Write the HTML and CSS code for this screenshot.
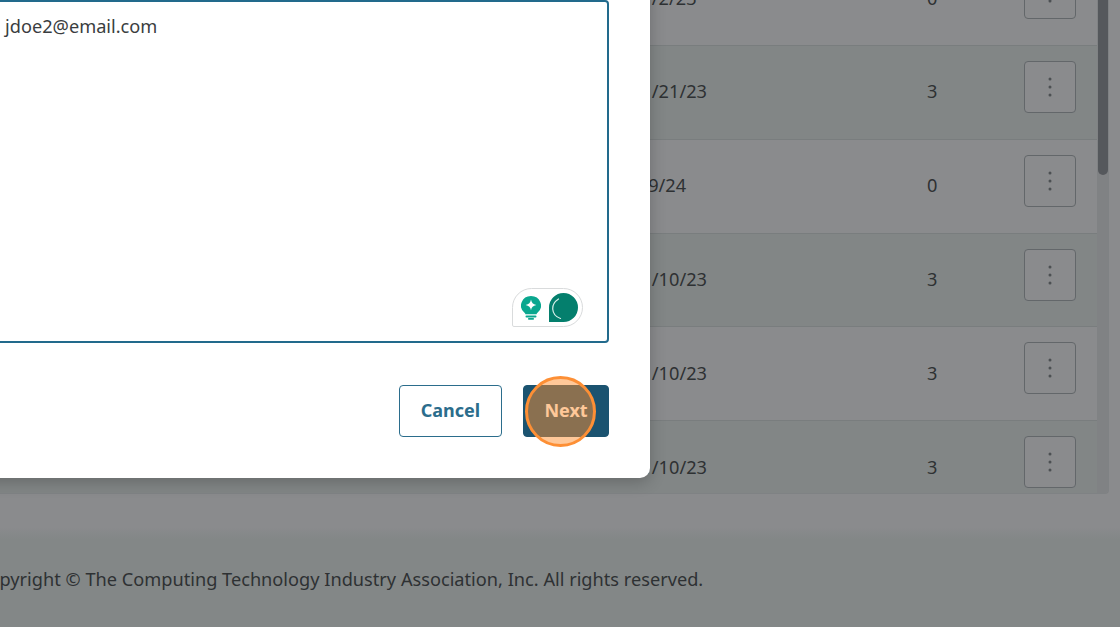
FILE: index.html
```html
<!DOCTYPE html>
<html lang="en">
<head>
<meta charset="utf-8">
<title>Users</title>
<link rel="stylesheet" href="styles.css">
</head>
<body>
<div class="page">
  <main class="table-wrap">
    <div class="rows">
      <div class="row row-a"><span class="date">11/2/23</span><span class="count">0</span><button class="more"><svg viewBox="0 0 4 20" class="dots"><circle cx="2" cy="2" r="1.5"/><circle cx="2" cy="10" r="1.5"/><circle cx="2" cy="18" r="1.5"/></svg></button></div>
      <div class="row row-b"><span class="date">11/21/23</span><span class="count">3</span><button class="more"><svg viewBox="0 0 4 20" class="dots"><circle cx="2" cy="2" r="1.5"/><circle cx="2" cy="10" r="1.5"/><circle cx="2" cy="18" r="1.5"/></svg></button></div>
      <div class="row row-a"><span class="date">1/9/24</span><span class="count">0</span><button class="more"><svg viewBox="0 0 4 20" class="dots"><circle cx="2" cy="2" r="1.5"/><circle cx="2" cy="10" r="1.5"/><circle cx="2" cy="18" r="1.5"/></svg></button></div>
      <div class="row row-b"><span class="date">11/10/23</span><span class="count">3</span><button class="more"><svg viewBox="0 0 4 20" class="dots"><circle cx="2" cy="2" r="1.5"/><circle cx="2" cy="10" r="1.5"/><circle cx="2" cy="18" r="1.5"/></svg></button></div>
      <div class="row row-a"><span class="date">11/10/23</span><span class="count">3</span><button class="more"><svg viewBox="0 0 4 20" class="dots"><circle cx="2" cy="2" r="1.5"/><circle cx="2" cy="10" r="1.5"/><circle cx="2" cy="18" r="1.5"/></svg></button></div>
      <div class="row row-b row-last"><span class="date">11/10/23</span><span class="count">3</span><button class="more"><svg viewBox="0 0 4 20" class="dots"><circle cx="2" cy="2" r="1.5"/><circle cx="2" cy="10" r="1.5"/><circle cx="2" cy="18" r="1.5"/></svg></button></div>
    </div>
    <div class="scrollbar"><div class="thumb"></div></div>
  </main>
  <footer class="footer"><span class="copyright">Copyright © The Computing Technology Industry Association, Inc. All rights reserved.</span></footer>
</div>
<section class="modal">
  <div class="field">
    <div class="email">jdoe2@email.com</div>
    <div class="assist">
      <svg class="bulb" viewBox="0 0 20 24"><path d="M10 0a10 9.500 0 0 1 6.500 16.700c-.6.5-.9 1-.9 1.500H4.400c0-.5-.3-1-.9-1.500A10 9.500 0 0 1 10 0z" fill="#0aa78f"/><rect x="4.500" y="19.400" width="11" height="2" rx="1" fill="#0aa78f"/><rect x="7" y="22" width="6" height="1.700" rx=".8" fill="#0aa78f"/><path d="M10 3.500c.5 3.200 2 4.700 5.400 5.400-3.400.7-4.900 2.200-5.400 5.400-.5-3.200-2-4.700-5.400-5.400 3.400-.7 4.900-2.200 5.400-5.400z" fill="#fff"/></svg>
      <svg class="chat" viewBox="0 0 29 29"><path d="M14.500 0a14.500 14.500 0 0 1 0 29H0V14.500A14.500 14.500 0 0 1 14.500 0z" fill="#047f6d"/><path d="M9.500 6C5 9 3.500 13 3.700 16 4 20 7 24 11.500 25.500" fill="none" stroke="#d8efe9" stroke-width="1.200" stroke-linecap="round"/></svg>
    </div>
  </div>
  <div class="actions">
    <button class="btn btn-cancel">Cancel</button>
    <button class="btn btn-next">Next</button>
  </div>
</section>
<div class="spotlight"></div>
</body>
</html>
```
FILE: styles.css
```css
* { box-sizing: border-box; }
html, body { margin: 0; height: 100%; overflow: hidden; }
body {
  font-family: "Noto Sans", "Open Sans", sans-serif;
  font-size: 18.2px;
  color: #2e3133;
  background: #8a8b8d;
}
.page { width: 1120px; height: 627px; display: flex; flex-direction: column; overflow: hidden; }
.table-wrap {
  position: relative;
  height: 494px;
  width: 1109px;
  flex: none;
  overflow: hidden;
  border-right: 1px solid #7f8284;
  border-bottom: 1px solid #7f8284;
  border-bottom-right-radius: 4px;
}
.rows { margin-top: -48px; }
.row {
  height: 93.85px;
  display: flex;
  align-items: flex-start;
  padding-left: 631px;
  border-bottom: 1px solid #797d7e;
}
.row-last { border-bottom: 0; }
.row-a { background: #8a8b8d; }
.row-b { background: #828686; }
.date { width: 296px; flex: none; line-height: 25px; margin-top: 33.500px; }
.count { width: 97px; flex: none; line-height: 25px; margin-top: 33.500px; }
.more {
  margin-top: 15px;
  width: 52px;
  height: 52px;
  flex: none;
  padding: 0;
  display: flex;
  align-items: center;
  justify-content: center;
  background: #8a8b8d;
  border: 1px solid #63676a;
  border-radius: 4px;
}
.dots { width: 4px; height: 20px; fill: #4c5053; }
.scrollbar { position: absolute; top: 0; right: 0; bottom: 0; width: 11px; background: #808284; }
.thumb { width: 10px; height: 175px; margin-left: 1px; background: #55585c; border-radius: 0 0 5px 5px; }
.footer {
  margin-top: 33px;
  height: 100px;
  flex: none;
  display: flex;
  align-items: center;
  padding-top: 6px;
  padding-bottom: 2px;
  background: linear-gradient(180deg, #8a8b8d 0, #838787 12px);
  white-space: nowrap;
}
.copyright { margin-left: -23px; line-height: 25px; }
.modal {
  position: absolute;
  top: -20px;
  left: -20px;
  width: 670px;
  height: 498px;
  background: #fff;
  border-radius: 0 0 10px 0;
  box-shadow: 0 4px 16px rgba(0,0,0,.22);
  padding: 20px 41px 0 0;
  display: flex;
  flex-direction: column;
}
.field {
  position: relative;
  height: 343px;
  border: 2px solid #226a8c;
  border-radius: 4px;
  padding: 12px 0 0 23px;
  line-height: 25px;
  color: #3a3d40;
}
.assist {
  position: absolute;
  right: 24px;
  bottom: 14px;
  width: 71px;
  height: 39px;
  display: flex;
  align-items: center;
  gap: 8px;
  padding-left: 8px;
  background: #fff;
  border: 1px solid #d9dbdc;
  border-radius: 20px 20px 20px 2px;
}
.bulb { width: 20px; height: 24px; flex: none; margin-top: 1px; }
.chat { width: 29px; height: 29px; flex: none; }
.actions { display: flex; justify-content: flex-end; gap: 21px; margin-top: 42px; }
.btn {
  height: 52px;
  font: 700 18px "Noto Sans", "Open Sans", sans-serif;
  border-radius: 4px;
  padding: 0 0 2px;
}
.btn-cancel { width: 103px; background: #fff; border: 1px solid #2b6d8c; color: #2b6d8c; }
.btn-next { width: 86px; background: #1b5370; border: 1px solid #1b5370; color: #fff; }
.spotlight {
  position: absolute;
  left: 525px;
  top: 376px;
  width: 71px;
  height: 71px;
  border-radius: 50%;
  background: rgba(255,142,46,.49);
  border: 3px solid #fd8f35;
}
```
